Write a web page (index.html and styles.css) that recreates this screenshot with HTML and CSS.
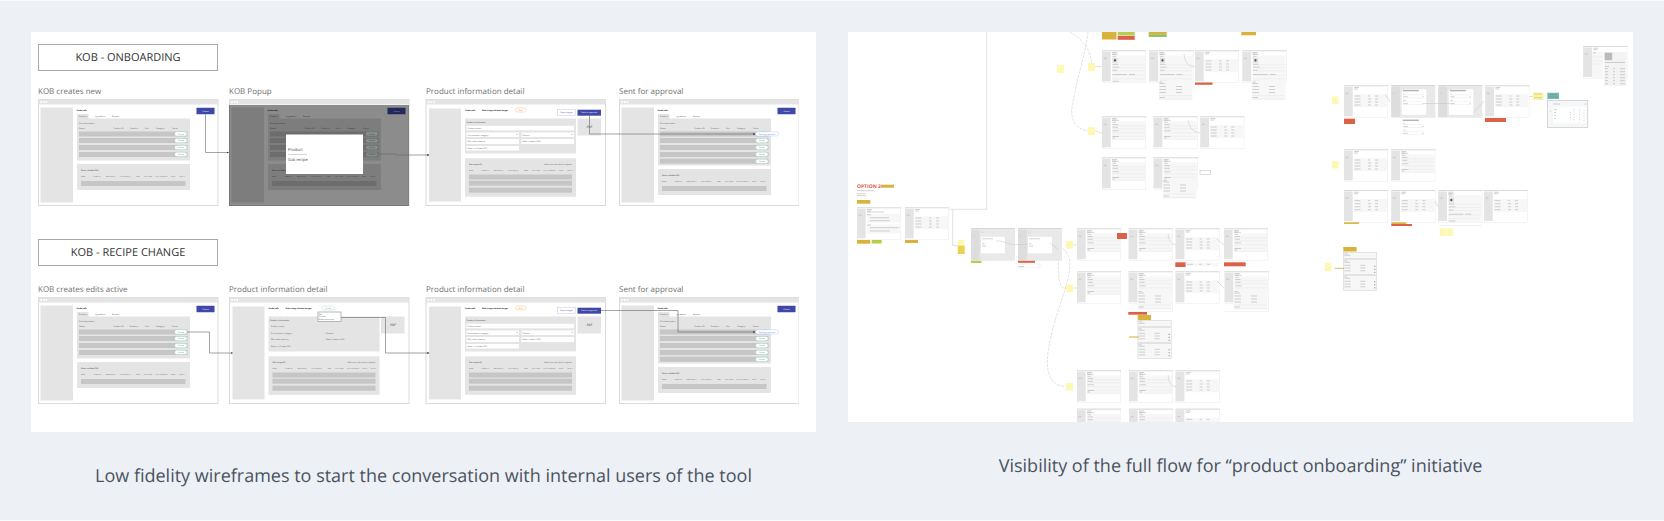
FILE: index.html
```
<!DOCTYPE html>
<html lang="en">
<head>
    <meta charset="UTF-8">
    <meta name="viewport" content="width=device-width, initial-scale=1.0">
    <title>Low fidelity wireframes</title>
    <link rel="stylesheet" href="styles.css">
</head>
<body>
    <!-- shared wireframe parts -->
    <svg class="defs" width="0" height="0" aria-hidden="true">
        <defs>
            <marker id="arrow" viewBox="0 0 4 4" refX="3" refY="2" markerWidth="4" markerHeight="4" orient="auto">
                <path d="M0 .5L4 2L0 3.5z" fill="#333"/>
            </marker>

            <symbol id="window" viewBox="0 0 181 107" overflow="visible">
                <rect class="frame" x=".5" y=".5" width="179.5" height="106"/>
                <rect class="bar" x=".5" y=".5" width="179.5" height="5"/>
                <circle cx="3" cy="3" r="1" fill="#fff"/>
                <circle cx="5.7" cy="3" r="1" fill="#fff"/>
                <circle cx="8.4" cy="3" r="1" fill="#fff"/>
            </symbol>

            <symbol id="active" viewBox="0 0 13 5" overflow="visible">
                <rect x=".2" y=".2" width="12.3" height="4.3" rx="2" fill="#fff" stroke="#9bd3ba" stroke-width=".4"/>
                <text x="6.3" y="3.1" class="tiny mid green">Active</text>
            </symbol>

            <symbol id="skuHead" viewBox="0 0 220 8" overflow="visible">
                <g class="head">
                    <text x="0" y="4">Name</text>
                    <text x="25" y="4">Product ID</text>
                    <text x="50" y="4">Max quantity</text>
                    <text x="78" y="4">Gross quantity</text>
                    <text x="110" y="4">Yield</text>
                    <text x="126" y="4">Cost of SKU</text>
                    <text x="149" y="4">Cost contribution</text>
                    <text x="180" y="4">Status</text>
                    <text x="197" y="4">Actions</text>
                </g>
            </symbol>

            <symbol id="listTop" viewBox="0 0 181 107" overflow="visible">
                <use href="#window" width="181" height="107"/>
                <rect class="grey" x="2.5" y="8.5" width="32.5" height="95"/>
                <text class="title" x="38.5" y="11.7">Onda cafe</text>
                <rect class="grey" x="39" y="15" width="11.5" height="5"/>
                <text class="tiny" x="41" y="18">Products</text>
                <text class="tiny" x="57" y="18">Ingredients</text>
                <text class="tiny" x="74" y="18">Recipes</text>
                <rect x="158.5" y="8.7" width="18" height="6.5" rx=".5" fill="#3f47a8"/>
                <text class="tiny mid white" x="167.5" y="12.7">Create</text>
            </symbol>
            <symbol id="listHead" viewBox="0 0 181 107" overflow="visible">
                <text class="tiny" x="41" y="24.5">Finished product</text>
                <g class="tiny">
                    <text x="41" y="29.5">Name</text>
                    <text x="75.5" y="29.5">Product ID</text>
                    <text x="92" y="29.5">Products</text>
                    <text x="107" y="29.5">Unit</text>
                    <text x="118" y="29.5">Category</text>
                    <text x="134" y="29.5">Status</text>
                </g>
                <rect class="row" x="41" y="32.5" width="108.5" height="5"/>
                <rect class="row" x="41" y="39" width="108.5" height="5"/>
                <rect class="row" x="41" y="46" width="108.5" height="5"/>
                <rect class="row" x="41" y="53" width="108.5" height="5"/>
                <use href="#active" x="136.5" y="39.3" width="13" height="5"/>
                <use href="#active" x="136.5" y="46.2" width="13" height="5"/>
                <use href="#active" x="136.5" y="53" width="13" height="5"/>
            </symbol>

            <symbol id="list" viewBox="0 0 181 107" overflow="visible">
                <use href="#listTop" width="181" height="107"/>
                <rect class="grey" x="39" y="19.5" width="113" height="42"/>
                <use href="#listHead" width="181" height="107"/>
                <use href="#active" x="136.5" y="32.5" width="13" height="5"/>
                <rect class="grey" x="39" y="65" width="113" height="26"/>
                <text class="tiny dark" x="43" y="72.3">Direct sellable SKU</text>
                <use href="#skuHead" x="43" y="75.5" width="110" height="4"/>
                <rect class="row" x="43" y="82" width="104.5" height="5"/>
            </symbol>

            <symbol id="approval" viewBox="0 0 181 107" overflow="visible">
                <use href="#listTop" width="181" height="107"/>
                <rect class="grey" x="39" y="19.5" width="113" height="47"/>
                <use href="#listHead" width="181" height="107"/>
                <rect class="row" x="41" y="59.7" width="108.5" height="5"/>
                <use href="#active" x="136.5" y="60" width="13" height="5"/>
                <rect x="136.5" y="32.8" width="23" height="4.2" rx="2" fill="#fff" stroke="#a5c8f0" stroke-width=".4"/>
                <text class="tiny mid blue" x="148" y="35.6">Pending approval</text>
                <rect class="grey" x="39" y="70" width="113" height="26"/>
                <text class="tiny dark" x="43" y="77.3">Direct sellable SKU</text>
                <use href="#skuHead" x="43" y="80.7" width="110" height="4"/>
                <rect class="row" x="43" y="87" width="104.5" height="5"/>
            </symbol>

            <symbol id="detailBase" viewBox="0 0 181 107" overflow="visible">
                <use href="#window" width="181" height="107"/>
                <rect class="grey" x="3.5" y="9.5" width="32" height="93"/>
                <text class="title" x="39.5" y="12">Onda cafe</text>
                <text class="title" x="56.5" y="12">Kids crispy chicken burger</text>
                <rect class="grey" x="39.5" y="19.5" width="111" height="35"/>
                <text class="tiny dark" x="41" y="24.2">Product information</text>
                <rect class="grey" x="152" y="19.5" width="23.5" height="17"/>
                <text class="pdf mid" x="164" y="29.3">PDF</text>
                <rect class="grey" x="39.5" y="59.3" width="111" height="38.5"/>
                <text class="tiny dark" x="43.5" y="66.3">Sub recipe (2)</text>
                <text class="tiny" x="146.5" y="66.3" text-anchor="end">Add to our distributor request</text>
                <use href="#skuHead" x="43.5" y="69.7" width="110" height="4"/>
                <rect class="row" x="43.5" y="75.5" width="103" height="5"/>
                <rect class="row" x="43.5" y="81.7" width="103" height="5"/>
                <rect class="row" x="43.5" y="88.7" width="103" height="5"/>
            </symbol>

            <symbol id="detailText" viewBox="0 0 181 107" overflow="visible">
                <g class="tiny">
                    <text x="42" y="30">Product name</text>
                    <text x="42" y="36.5">Procurement category</text>
                    <text x="97" y="36.5">Finance</text>
                    <text x="42" y="43">Min order quantity</text>
                    <text x="97" y="43">Does it need to SKU</text>
                    <text x="42" y="49.7">Does it still open (SK)</text>
                </g>
            </symbol>

            <symbol id="detailEdit" viewBox="0 0 181 107" overflow="visible">
                <use href="#detailBase" width="181" height="107"/>
                <rect x="90" y="9" width="10.5" height="4" rx="1.8" fill="#fff" stroke="#f0b868" stroke-width=".4"/>
                <text class="tiny mid orange" x="95.2" y="11.7">Draft</text>
                <rect x="131.7" y="10.7" width="18.5" height="6" fill="#fff" stroke="#b4b7e2" stroke-width=".4"/>
                <text class="tiny mid indigo" x="141" y="14.4">Save changes</text>
                <rect x="152" y="10.7" width="23.5" height="6" fill="#3f47a8"/>
                <text class="tiny mid white" x="163.7" y="14.4">Send to approval</text>
                <g fill="#fff">
                    <rect x="41" y="26.8" width="107.5" height="4.5"/>
                    <rect x="41" y="33.5" width="52.5" height="4.5"/>
                    <rect x="96" y="33.5" width="52.5" height="4.5"/>
                    <rect x="41" y="40" width="52.5" height="5"/>
                    <rect x="96" y="40" width="52.5" height="5"/>
                    <rect x="41" y="47" width="52.5" height="4.5"/>
                </g>
                <path d="M91 35.3l.7.7l.7-.7M146 35.3l.7.7l.7-.7" fill="none" stroke="#666" stroke-width=".4"/>
                <use href="#detailText" width="181" height="107"/>
            </symbol>

            <symbol id="detailRead" viewBox="0 0 181 107" overflow="visible">
                <use href="#detailBase" width="181" height="107"/>
                <rect x="93.2" y="9" width="12" height="4" rx="1.8" fill="#fff" stroke="#9bd3ba" stroke-width=".4"/>
                <text class="tiny mid green" x="99.2" y="11.7">Active</text>
                <use href="#detailText" width="181" height="107"/>
                <rect x="89" y="15" width="23" height="9.7" fill="#fff" stroke="#777" stroke-width=".5"/>
                <text class="tiny" x="89.7" y="17.5">Edit</text>
                <text class="tiny" x="89.7" y="20.2">Archive</text>
                <text class="tiny" x="89.7" y="23">Duplicate recipe</text>
            </symbol>

            <!-- thumbnails for the full flow -->
            <symbol id="thumb" viewBox="0 0 44 32" overflow="visible">
                <rect class="t-frame" x=".2" y=".2" width="43.6" height="32"/>
                <rect class="t-top" width="44" height="1"/>
                <rect class="t-side" y="1.5" width="8.7" height="29.5"/>
                <path class="t-text" d="M1.5 8H4.5M10 2.2H15M10 3.7H14"/>
            </symbol>
            <symbol id="form" viewBox="0 0 44 32" overflow="visible">
                <use href="#thumb" width="44" height="32"/>
                <rect class="t-panel" x="10" y="5.2" width="33" height="18"/>
                <path class="t-line" d="M10 9.5H43M10 12.5H43M10 16.5H43M10 20H43M10 23H43"/>
                <path class="t-text" d="M10 4H17M10.5 6H14M10.5 8.2H16M10.5 11H16M10.5 14.5H17M10.5 20.2H17M10.5 21.7H13"/>
            </symbol>
            <symbol id="formImage" viewBox="0 0 44 32" overflow="visible">
                <use href="#thumb" width="44" height="32"/>
                <rect class="t-panel" x="10" y="5.2" width="33" height="27"/>
                <path class="t-line" d="M10 14.5H43M10 17.5H43M10 20.5H43M10 25H43M10 28.5H43"/>
                <rect x="10.5" y="7.5" width="5" height="5" fill="#ddd"/>
                <circle cx="13" cy="10" r="1.1" fill="#444"/>
                <path class="t-text" d="M10 4H16M10.5 6H14M10.5 14H16M10.5 16.8H17M10.5 20H15M10.5 24.2H25M27 24.2H33M10.5 31H17"/>
            </symbol>
            <symbol id="recipePanel" viewBox="0 0 34 19" overflow="visible">
                <rect class="t-panel" width="33.5" height="19"/>
                <path class="t-text" d="M.5 1H3.5M.5 2.5H6M.5 5.5H7M17 5.5H23M.5 8.5H7M17 8.5H23M.5 11.5H7M17 11.5H23M.5 16.5H6"/>
                <path class="t-line" d="M0 14.5H33M0 18H33"/>
            </symbol>
            <symbol id="table" viewBox="0 0 44 32" overflow="visible">
                <use href="#thumb" width="44" height="32"/>
                <rect class="t-panel" x="9.5" y="9" width="33.5" height="13"/>
                <path class="t-text" d="M10.5 10.7H16.5M24 10.7H26M31 10.7H34M10.5 13.7H16.5M24 13.7H27M31 13.7H34M10.5 16.7H16.5M24 16.7H27M31 16.7H34M10.5 19.7H16.5M24 19.7H27M31 19.7H34"/>
            </symbol>
            <symbol id="shade" viewBox="0 0 44 32" overflow="visible">
                <rect width="44" height="32.5" fill="#e9e9e9"/>
                <rect width="44" height=".7" fill="#ccc"/>
                <rect y="1.5" width="8.7" height="30" fill="#ddd"/>
                <path class="t-text" d="M1.5 8H4M10 4H13" opacity=".5"/>
            </symbol>
            <symbol id="dialog" viewBox="0 0 44 32" overflow="visible">
                <use href="#shade" width="44" height="32"/>
                <rect x="10" y="8.5" width="24" height="16.5" fill="#fff"/>
                <path class="t-text" d="M11 10.5H22M11 15.5H13.5M11 17.8H15"/>
            </symbol>
            <symbol id="dialogText" viewBox="0 0 24 16" overflow="visible">
                <path d="M0 1.3H16" stroke="#b5b5b5" stroke-width="1.5"/>
                <path class="t-text" d="M.5 4.7H2M.5 7.5H5M19.5 7.5H21M.5 11H3M.5 14.3H5M19.5 14.3H21"/>
                <path class="t-line" d="M0 5.5H21M0 8.5H21M0 12.3H21M0 15.3H21"/>
            </symbol>
            <symbol id="dialogTall" viewBox="0 0 44 32" overflow="visible">
                <use href="#shade" width="44" height="32"/>
                <rect x="10.5" y="4" width="24.5" height="25.5" fill="#fff"/>
                <use href="#dialogText" x="11.5" y="4" width="24" height="16"/>
            </symbol>
            <symbol id="card" viewBox="0 0 34 39" overflow="visible">
                <g fill="#f7f7f7" stroke="#ccc" stroke-width=".5">
                    <rect x=".2" y=".2" width="33.3" height="6"/>
                    <rect x=".2" y="7.2" width="33.3" height="15"/>
                    <rect x=".2" y="23" width="33.3" height="15"/>
                </g>
                <path class="t-text" d="M1 1.5H4.5M1 3H7M1 8.5H4M1 10H7M1 13H7.5M17 13H22M1 15.7H7.5M17 15.7H22M1 18.5H7.5M17 18.5H22M1 24.5H4M1 26H7M1 29H7.5M17 29H22M1 31.8H7.5M17 31.8H22M1 34.5H7.5M17 34.5H22"/>
                <path d="M31.5 13.5V20.5M31.5 29V37" stroke="#666" stroke-width=".9" stroke-dasharray="1 2"/>
            </symbol>
            <symbol id="note" viewBox="0 0 7 8">
                <rect width="7" height="8" fill="#fdf8b4"/>
            </symbol>
        </defs>
    </svg>

    <main class="gallery">
        <figure>
            <div class="board wireframes">
                <section class="flow">
                    <h2>KOB - ONBOARDING</h2>
                    <ol>
                        <li>KOB creates new</li>
                        <li>KOB Popup</li>
                        <li>Product information detail</li>
                        <li>Sent for approval</li>
                    </ol>
                    <svg viewBox="0 0 761 107" role="img" aria-label="Onboarding wireframes">
                        <use href="#list" width="181" height="107"/>
                        <use href="#list" x="191" width="181" height="107"/>
                        <rect x="191" y="6" width="180" height="101" fill="#000" fill-opacity=".45"/>
                        <rect x="248" y="35.5" width="77" height="39.5" fill="#fff"/>
                        <text class="popup" x="250" y="51.7">Product</text>
                        <path d="M250 55.5H269" stroke="#aaa" stroke-width=".5"/>
                        <text class="popup" x="250" y="61.5">Sub recipe</text>
                        <use href="#detailEdit" x="387.5" width="181" height="107"/>
                        <use href="#approval" x="581" width="181" height="107"/>
                        <g class="wire">
                            <path d="M167.5 15.5V53.5H190.5"/>
                            <path d="M326 55H358V56H391"/>
                            <path d="M551.5 16.5V35H717"/>
                        </g>
                    </svg>
                </section>

                <section class="flow">
                    <h2>KOB - RECIPE CHANGE</h2>
                    <ol>
                        <li>KOB creates edits active</li>
                        <li>Product information detail</li>
                        <li>Product information detail</li>
                        <li>Sent for approval</li>
                    </ol>
                    <svg viewBox="0 0 761 107" role="img" aria-label="Recipe change wireframes">
                        <use href="#list" width="181" height="107"/>
                        <use href="#detailRead" x="191" width="181" height="107"/>
                        <use href="#detailEdit" x="387.5" width="181" height="107"/>
                        <use href="#approval" x="581" width="181" height="107"/>
                        <g class="wire">
                            <path d="M149.5 35H171.5V56H194.5"/>
                            <path d="M303 20.5H347.5V56H391"/>
                            <path d="M563 13.5H640V35H717"/>
                        </g>
                    </svg>
                </section>
            </div>
            <figcaption>Low fidelity wireframes to start the conversation with internal users of the tool</figcaption>
        </figure>

        <figure>
            <div class="board">
                <svg viewBox="0 0 785 390" role="img" aria-label="Full product onboarding flow">
                    <!-- long connectors -->
                    <path class="link" d="M138.7 0V177.3H101M104.7 177.3V213.7H110"/>
                    <path class="link dashed" d="M222 0C236 8 242 18 243.5 31M240 0C238 20 228 50 224 75C222 90 230 98 240 98.7"/>
                    <path class="link" d="M247 34.5H254M247 99L254 101"/>
                    <path class="link dashed" d="M206 212C216 215 204 256 218 256.5M208 213C240 225 208 265 200 320C197 345 205 354 218 354.5"/>

                    <!-- top tags -->
                    <rect class="gold" x="254" width="14.5" height="7.5"/>
                    <rect class="lime" x="269.7" width="17" height="3.3"/>
                    <rect class="red" x="269.7" y="3.8" width="17" height="4"/>
                    <rect class="gold" x="300.7" width="18" height="2.3"/>
                    <rect class="leaf" x="300.7" y="2.3" width="18" height="2.6"/>
                    <rect class="gold" x="393.3" width="14.7" height="3.3"/>

                    <use href="#note" x="209" y="33" width="7" height="8"/>
                    <use href="#note" x="240" y="31" width="7" height="8"/>
                    <use href="#note" x="240" y="95" width="7" height="8"/>

                    <use href="#formImage" x="254" y="18.3" width="44" height="32"/>
                    <use href="#formImage" x="301.5" y="18.3" width="44" height="32"/>
                    <use href="#recipePanel" x="311" y="49" width="34" height="19"/>
                    <use href="#table" x="347" y="18.3" width="44" height="32"/>
                    <rect class="red" x="347" y="50.5" width="17.5" height="2.3"/>
                    <use href="#formImage" x="394.5" y="18.3" width="44" height="32"/>
                    <use href="#recipePanel" x="404" y="49" width="34" height="19"/>

                    <use href="#form" x="254" y="84.3" width="44" height="32"/>
                    <use href="#form" x="305.7" y="84.3" width="44" height="32"/>
                    <use href="#table" x="352.3" y="84.3" width="44" height="32"/>

                    <use href="#form" x="254" y="125.3" width="44" height="32"/>
                    <use href="#form" x="305.7" y="125.3" width="44" height="32"/>
                    <use href="#recipePanel" x="315" y="147.5" width="34" height="19"/>
                    <rect x="352" y="138.5" width="10.5" height="4" fill="#fff" stroke="#bbb" stroke-width=".5"/>

                    <!-- option 2 -->
                    <text class="option" x="9" y="156.2">OPTION 2</text>
                    <rect class="gold" x="33" y="152.7" width="13" height="3"/>
                    <path class="t-text" d="M9 158.7H26M9 161.7H18M9 163.7H18"/>
                    <rect class="gold" x="9" y="168" width="13.3" height="3.7"/>
                    <use href="#thumb" x="9" y="175.3" width="44" height="32"/>
                    <rect class="t-panel" x="19" y="182" width="33" height="8.5"/>
                    <rect class="t-panel" x="19" y="192.5" width="33" height="9"/>
                    <path class="t-text" d="M19 180H36M19 182.7H23M22 185.7H41M22 188.7H42M19 193H23M22 195.7H51M22 199H42"/>
                    <use href="#table" x="57" y="175.3" width="44" height="32"/>
                    <rect class="gold" x="9" y="208" width="13.3" height="3.7"/>
                    <rect class="lime" x="23.7" y="208" width="10" height="3.5"/>
                    <rect class="gold" x="57" y="208" width="13" height="3"/>

                    <use href="#note" x="109.7" y="207.5" width="7" height="8"/>
                    <rect x="109.7" y="213.7" width="7" height="8.3" fill="#ecd252"/>
                    <use href="#dialog" x="123" y="196.3" width="44" height="32"/>
                    <rect class="lime" x="123" y="228.8" width="10.5" height="2.2"/>
                    <use href="#dialog" x="170" y="196.3" width="44" height="32"/>
                    <rect class="red" x="170" y="228.8" width="17" height="2"/>
                    <path class="t-text" d="M170.5 234.5H176"/>
                    <path class="t-line" d="M170.5 232H192V235.5H170.5z"/>
                    <use href="#note" x="218" y="208.8" width="7" height="8"/>
                    <use href="#note" x="218" y="252.3" width="7" height="8"/>
                    <use href="#note" x="218" y="350.7" width="7" height="8"/>

                    <use href="#form" x="229" y="196.3" width="44" height="32"/>
                    <rect class="red" x="269" y="201" width="10" height="6"/>
                    <use href="#form" x="280.7" y="196.3" width="44" height="32"/>
                    <use href="#table" x="327.7" y="196.3" width="44" height="32"/>
                    <rect class="red" x="327.3" y="230.3" width="10.3" height="4.7"/>
                    <rect class="t-panel" x="338" y="230.5" width="32" height="3.5"/>
                    <path class="t-text" d="M339 232.3H345M351 232.3H354M359 232.3H362"/>
                    <use href="#form" x="376" y="196.3" width="44" height="32"/>
                    <rect class="red" x="376" y="230.3" width="21.7" height="4"/>

                    <use href="#form" x="229" y="239.3" width="44" height="32"/>
                    <use href="#form" x="280.7" y="239.3" width="44" height="32"/>
                    <use href="#recipePanel" x="290" y="258.5" width="34" height="19"/>
                    <use href="#table" x="327.7" y="239.3" width="44" height="32"/>
                    <use href="#form" x="376.7" y="239.3" width="44" height="32"/>
                    <use href="#recipePanel" x="386" y="258.5" width="34" height="19"/>
                    <path class="t-line" d="M281 279.5H324.5V271M377 279.5H420.5V271"/>

                    <rect class="red" x="280.3" y="280" width="18.7" height="2.7"/>
                    <rect class="gold" x="289.7" y="283" width="13.3" height="5"/>
                    <use href="#card" x="289.7" y="288.3" width="34" height="39"/>
                    <rect class="gold" x="281" y="304.5" width="10" height="1"/>

                    <use href="#form" x="229" y="338.3" width="44" height="32"/>
                    <use href="#form" x="281" y="338.3" width="44" height="32"/>
                    <use href="#table" x="327.7" y="338.3" width="44" height="32"/>
                    <use href="#form" x="229" y="376.7" width="44" height="32"/>
                    <use href="#form" x="281" y="376.7" width="44" height="32"/>
                    <use href="#table" x="327.7" y="376.7" width="44" height="32"/>

                    <!-- right hand flow -->
                    <use href="#thumb" x="735.3" y="14" width="44" height="32"/>
                    <rect class="t-panel" x="744" y="20" width="11" height="26"/>
                    <rect x="756" y="20" width="22.5" height="34" fill="#f3f3f3"/>
                    <rect x="756.7" y="20.7" width="7.5" height="7.5" fill="#bbb"/>
                    <path class="t-line" d="M744 25H755M744 29H755M744 32H755"/>
                    <path class="t-text" d="M745 20.7H748M757 30.5H777M757 34.5H761M757 36.7H760M765 36.7H767M772 36.7H777M757 39.7H760M765 39.7H767M772 39.7H777M757 42.7H760M765 42.7H767M772 42.7H777M757 45.7H760M765 45.7H767M772 45.7H777M757 48.7H760M765 48.7H767M772 48.7H777M757 51.7H760M765 51.7H767M772 51.7H777"/>

                    <use href="#note" x="483.7" y="64.3" width="7" height="8"/>
                    <use href="#table" x="496" y="53.3" width="44" height="32"/>
                    <rect class="red" x="496" y="86.7" width="11" height="5.3"/>
                    <use href="#dialogTall" x="543.3" y="53.3" width="44" height="32"/>
                    <use href="#dialogText" x="554.8" y="87" width="24" height="16"/>
                    <use href="#dialogTall" x="590.3" y="53.3" width="44" height="32"/>
                    <use href="#table" x="637.3" y="53.3" width="44" height="32"/>
                    <rect class="red" x="637" y="86" width="21" height="4"/>
                    <rect x="684.7" y="60.5" width="11" height="7.5" fill="#f9f5a0"/>
                    <path class="t-text" d="M686 62H694M686 65.7H694"/>
                    <rect x="699.3" y="60.7" width="11.7" height="6.3" fill="#78b8b1"/>
                    <path d="M701 62.7H709M700.5 65H710" stroke="#4f8f89" stroke-width=".5"/>
                    <rect x="699.5" y="68.5" width="40.3" height="27" fill="#f5f7f8" stroke="#c4c8ca" stroke-width=".7"/>
                    <rect x="705" y="74.5" width="33" height="16.5" fill="#fff"/>
                    <path class="t-text" d="M705 72H712M736.5 72H738.5M702 79.3H703M706 77.5H709M706 80.5H708M706 83.5H708M706 86.5H708"/>
                    <path d="M722.5 80V90M726 77V90M731.5 77V90M736 78V90" stroke="#bbb" stroke-width=".6" stroke-dasharray="1 1.5"/>

                    <use href="#note" x="483.7" y="128.7" width="7" height="8"/>
                    <use href="#table" x="496" y="117.3" width="44" height="32"/>
                    <use href="#form" x="543.3" y="117.3" width="44" height="32"/>

                    <use href="#table" x="496" y="158" width="44" height="32"/>
                    <use href="#table" x="543.3" y="158" width="44" height="32"/>
                    <use href="#formImage" x="590.3" y="158" width="44" height="32"/>
                    <use href="#table" x="636" y="158" width="44" height="32"/>
                    <rect class="gold" x="496" y="190.3" width="15" height="1.6"/>
                    <rect class="gold" x="543.3" y="190.3" width="15" height="1.6"/>
                    <rect class="red" x="543.3" y="192" width="20.7" height="2"/>
                    <path class="t-line" d="M590.5 193.5H634"/>
                    <use href="#note" x="591.5" y="196.3" width="7" height="8"/>
                    <use href="#note" x="598.5" y="196.3" width="7" height="8"/>

                    <rect class="gold" x="495.3" y="215" width="13.3" height="4.5"/>
                    <use href="#card" x="495.3" y="220.3" width="34" height="39"/>
                    <use href="#note" x="476.7" y="231" width="7" height="8"/>
                    <path d="M486.7 236.3H496" stroke="#b5a642" stroke-width=".7"/>

                    <!-- short connectors -->
                    <path class="link" d="M336 22C337 32 341 34.5 347 34.5M340 88C342 98 347 100.5 352 100.5"/>
                    <path class="link" d="M148 209C160 209 155 212.5 170 212.5H180M202 211L210 217M225 213H229M225 256H229"/>
                    <path class="link" d="M320 202C321 210 323 212 328 212.5M369 207L376 213M369 249L376 256M320 343C321 352 323 354.5 328 354.5"/>
                    <path class="link" d="M537 62L542 70M576 71.5H602M625 81L636 69M681 64.5H685M587 169L590 175"/>
                </svg>
            </div>
            <figcaption>Visibility of the full flow for “product onboarding” initiative</figcaption>
        </figure>
    </main>
</body>
</html>
```
FILE: styles.css
```
* {
    box-sizing: border-box;
}
body {
    margin: 0;
    background-color: #edf1f6;
    border-top: 1px solid #fafbfc;
    border-bottom: 1px solid #fafbfc;
    font-family: "Open Sans", "Noto Sans", sans-serif;
    color: #4a5361;
    text-rendering: geometricPrecision;
}
.defs {
    position: absolute;
}
.gallery {
    display: flex;
    align-items: flex-start;
    gap: 32px;
    padding: 31px 31px 28px;
}
figure {
    flex: 1;
    min-width: 0;
    margin: 0;
}
.board {
    background-color: #fff;
}
.board svg {
    display: block;
    width: 100%;
    overflow: hidden;
}
.wireframes {
    padding: 12px 17px 28px 7px;
}
figcaption {
    margin-top: 28px;
    font-size: 18px;
    line-height: 32px;
    text-align: center;
}

/* wireframe rows */
.flow h2 {
    width: 180px;
    margin: 0 0 14px;
    border: 1px solid #aaa;
    font-size: 11px;
    font-weight: 400;
    line-height: 25px;
    text-align: center;
    color: #333;
}
.flow ol {
    display: grid;
    grid-template-columns: 191fr 197fr 193fr 180fr;
    margin: 0;
    padding: 0 0 1px;
    list-style: none;
    font-size: 8px;
    line-height: 13px;
    color: #707070;
}
.flow + .flow {
    margin-top: 33px;
}
.flow + .flow h2 {
    margin-bottom: 17px;
}

/* wireframe drawing */
.frame {
    fill: #fff;
    stroke: #dadada;
    stroke-width: 1;
}
.bar,
.grey {
    fill: #e4e4e4;
}
.row {
    fill: #c6c6c6;
}
.tiny {
    font-size: 2px;
    fill: #555;
}
.dark {
    fill: #222;
}
.title {
    font-size: 2px;
    font-weight: 700;
    fill: #111;
}
.head {
    font-size: 3px;
    fill: #333;
}
.popup {
    font-size: 4px;
    fill: #444;
}
.pdf {
    font-size: 3px;
    fill: #333;
}
.mid {
    text-anchor: middle;
}
.green {
    fill: #2f9d6c;
}
.blue {
    fill: #4a8ad8;
}
.orange {
    fill: #e09020;
}
.indigo {
    fill: #3f47a8;
}
.white {
    fill: #fff;
}
.wire path {
    fill: none;
    stroke: #666;
    stroke-width: 0.6;
    marker-end: url(#arrow);
}

/* full flow drawing */
.t-frame {
    fill: #fff;
    stroke: #e4e4e4;
    stroke-width: 0.4;
}
.t-top {
    fill: #dadada;
}
.t-side {
    fill: #e4e4e4;
}
.t-panel {
    fill: #f7f7f7;
}
.t-line {
    fill: none;
    stroke: #e6e6e6;
    stroke-width: 0.5;
}
.t-text {
    fill: none;
    stroke: #b4b4b4;
    stroke-width: 0.6;
}
.link {
    fill: none;
    stroke: #c4c4c4;
    stroke-width: 0.5;
}
.dashed {
    stroke-dasharray: 3 1;
}
.gold {
    fill: #d9b23c;
}
.red {
    fill: #dc6148;
}
.lime {
    fill: #b4cf4a;
}
.leaf {
    fill: #8fbf5c;
}
.option {
    font-size: 5px;
    font-weight: 700;
    fill: #dc5a45;
}
```
